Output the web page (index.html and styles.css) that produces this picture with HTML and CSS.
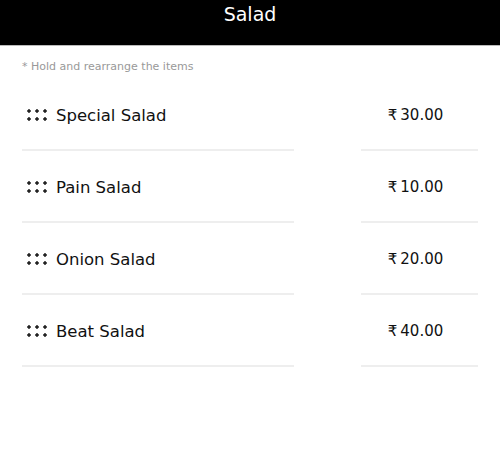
FILE: index.html
```html
<!DOCTYPE html>
<html lang="en">

<head>
    <meta charset="UTF-8">
    <meta name="viewport" content="width=device-width, initial-scale=1.0">
    <title>Salad</title>
    <link rel="stylesheet" href="styles.css">
</head>

<body>
    <header class="top-bar">
        <h1>Salad</h1>
    </header>

    <div class="content">
        <p class="hint">* Hold and rearrange the items</p>

        <!-- Sortable items -->
        <ul class="item-list">
            <li class="item">
                <div class="item-name"><span class="grip"></span>Special Salad</div>
                <div class="item-price">₹&#8201;30.00</div>
            </li>
            <li class="item">
                <div class="item-name"><span class="grip"></span>Pain Salad</div>
                <div class="item-price">₹&#8201;10.00</div>
            </li>
            <li class="item">
                <div class="item-name"><span class="grip"></span>Onion Salad</div>
                <div class="item-price">₹&#8201;20.00</div>
            </li>
            <li class="item">
                <div class="item-name"><span class="grip"></span>Beat Salad</div>
                <div class="item-price">₹&#8201;40.00</div>
            </li>
        </ul>
    </div>
</body>

</html>
```

FILE: styles.css
```css
body {
    font-family: "DejaVu Sans", sans-serif;
    background-color: #fff;
    color: #111;
    margin: 0;
}

.top-bar {
    background-color: #000;
    height: 45px;
    border-bottom: 1px solid #bbb;
}

.top-bar h1 {
    margin: 0;
    padding-top: 2px;
    text-align: center;
    color: #fff;
    font-size: 19px;
    font-weight: normal;
    line-height: 24px;
}

.content {
    padding: 0 22px;
}

.hint {
    margin: 14px 0 5px;
    color: #999;
    font-size: 11px;
    line-height: 14px;
}

.item-list {
    list-style-type: none;
    margin: 0;
    padding: 0;
}

.item {
    display: grid;
    grid-template-columns: 272px 117px;
    justify-content: space-between;
    height: 72px;
}

.item-name, .item-price {
    display: flex;
    align-items: center;
    border-bottom: 2px solid #eee;
    padding-top: 2px;
}

.item-name {
    font-size: 16.5px;
}

.item-price {
    justify-content: center;
    padding-right: 8px;
    font-size: 15px;
}

.grip {
    width: 23px;
    height: 12px;
    margin: 0 7px 0 4px;
    background-image: radial-gradient(circle, #222 1.5px, transparent 1.8px);
    background-size: 8px 8px;
    background-position: -1px -2px;
}
```
